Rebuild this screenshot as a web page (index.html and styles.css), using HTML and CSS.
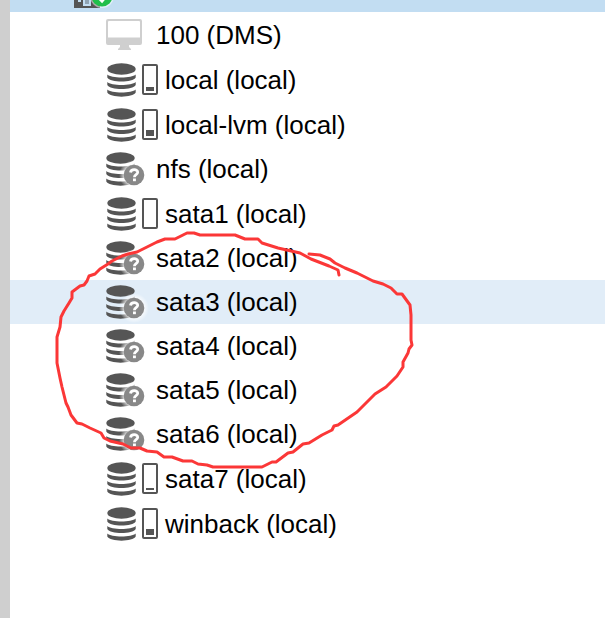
FILE: index.html
```html
<!DOCTYPE html>
<html lang="en">

<head>
    <meta charset="UTF-8">
    <meta name="viewport" content="width=device-width, initial-scale=1.0">
    <title>Server View</title>
    <link rel="stylesheet" href="styles.css">
</head>

<body>
    <!-- shared icons -->
    <svg class="sprite" aria-hidden="true">
        <symbol id="database" viewBox="0 0 29 34">
            <ellipse cx="14.500" cy="6" rx="14.200" ry="5.800" />
            <path d="M.3 11.500C4 15.500 25 15.500 28.700 11.500V14.500C26 19.800 3 19.800 .3 14.500Z" />
            <path d="M.3 19C4 23 25 23 28.700 19V22C26 27.300 3 27.300 .3 22Z" />
            <path d="M.3 26.500C4 30.500 25 30.500 28.700 26.500V29.500C26 35 3 35 .3 29.500Z" />
        </symbol>
        <symbol id="question" viewBox="0 0 30 30">
            <radialGradient id="halo">
                <stop offset="0.650" stop-color="#fff" stop-opacity=".8" />
                <stop offset="1" stop-color="#fff" stop-opacity="0" />
            </radialGradient>
            <circle cx="15" cy="15" r="15" fill="url(#halo)" />
            <circle cx="15" cy="15" r="10.300" fill="#888" />
            <path d="M11.500 12.500C12 8.800 18.700 8.800 18.700 12.300C18.700 14.800 15.400 14.600 15.400 17.200" fill="none" stroke="#fff" stroke-width="2.800" />
            <path d="M14 18.500h2.900v2.700H14z" fill="#fff" />
        </symbol>
    </svg>

    <div class="panel">
        <div class="node">
            <svg class="node-icon" viewBox="0 0 40 12" aria-hidden="true">
                <path d="M0 0H26V8H0Z" fill="#555" />
                <path d="M4 0h3v2H4zM9 0h8v6H9z" fill="#c2ddf2" />
                <path d="M11 0h4v4h-4z" fill="#8fa3b3" />
                <circle cx="28" cy="-4" r="12" fill="#fff" opacity=".5" />
                <circle cx="28" cy="-4" r="10.500" fill="#21bf4b" />
                <path d="M24 -3L28 1L34 -6" fill="none" stroke="#fff" stroke-width="3" />
            </svg>
        </div>
        <ul class="tree">
            <li class="item">
                <svg class="monitor" viewBox="0 0 36 32" aria-hidden="true">
                    <path fill-rule="evenodd" d="M2 0H34Q36 0 36 2V24Q36 26 34 26H23V28L25 30V31H12V30L14 28V26H2Q0 26 0 24V2Q0 0 2 0ZM3 2Q2 2 2 3V18.500H34V3Q34 2 33 2Z" />
                </svg>
                <span>100 (DMS)</span>
            </li>
            <li class="item storage">
                <svg class="database" aria-hidden="true"><use href="#database" /></svg>
                <span class="usage"><i style="height: 4px"></i></span>
                <span>local (local)</span>
            </li>
            <li class="item storage">
                <svg class="database" aria-hidden="true"><use href="#database" /></svg>
                <span class="usage"><i style="height: 6px"></i></span>
                <span>local-lvm (local)</span>
            </li>
            <li class="item">
                <span class="unknown">
                    <svg class="database" aria-hidden="true"><use href="#database" /></svg>
                    <svg class="question" aria-hidden="true"><use href="#question" /></svg>
                </span>
                <span>nfs (local)</span>
            </li>
            <li class="item storage">
                <svg class="database" aria-hidden="true"><use href="#database" /></svg>
                <span class="usage"><i style="height: 0"></i></span>
                <span>sata1 (local)</span>
            </li>
            <li class="item">
                <span class="unknown">
                    <svg class="database" aria-hidden="true"><use href="#database" /></svg>
                    <svg class="question" aria-hidden="true"><use href="#question" /></svg>
                </span>
                <span>sata2 (local)</span>
            </li>
            <li class="item active">
                <span class="unknown">
                    <svg class="database" aria-hidden="true"><use href="#database" /></svg>
                    <svg class="question" aria-hidden="true"><use href="#question" /></svg>
                </span>
                <span>sata3 (local)</span>
            </li>
            <li class="item">
                <span class="unknown">
                    <svg class="database" aria-hidden="true"><use href="#database" /></svg>
                    <svg class="question" aria-hidden="true"><use href="#question" /></svg>
                </span>
                <span>sata4 (local)</span>
            </li>
            <li class="item">
                <span class="unknown">
                    <svg class="database" aria-hidden="true"><use href="#database" /></svg>
                    <svg class="question" aria-hidden="true"><use href="#question" /></svg>
                </span>
                <span>sata5 (local)</span>
            </li>
            <li class="item">
                <span class="unknown">
                    <svg class="database" aria-hidden="true"><use href="#database" /></svg>
                    <svg class="question" aria-hidden="true"><use href="#question" /></svg>
                </span>
                <span>sata6 (local)</span>
            </li>
            <li class="item storage">
                <svg class="database" aria-hidden="true"><use href="#database" /></svg>
                <span class="usage"><i style="height: 2px"></i></span>
                <span>sata7 (local)</span>
            </li>
            <li class="item storage">
                <svg class="database" aria-hidden="true"><use href="#database" /></svg>
                <span class="usage"><i style="height: 6px"></i></span>
                <span>winback (local)</span>
            </li>
        </ul>

        <!-- red pen mark around sata2 - sata6 -->
        <svg class="mark" viewBox="50 225 370 250" aria-hidden="true">
            <path d="M339 275L338 270L329 266L311 259L300 253L278 248L262 243L258 239L245 239L235 235L200 235L194 233L187 233L175 239L165 239L157 242L147 247L137 252L128 254L122 256L112 261L108 264L100 269L95 274L89 276L87 281L84 285L80 286L72 292L72 298L69 303L64 311L61 317L60 327L57 337L57 363L60 378L62 387L66 403L68 407L71 415L77 423L82 424L90 428L101 433L104 438L110 441L123 444L131 448L140 448L147 451L157 452L164 457L172 457L183 461L192 461L198 464L207 465L213 467L262 467L272 462L276 462L288 453L293 452L303 444L309 443L322 435L332 430L334 426L338 425L357 412L375 394L386 387L397 376L403 367L403 362L408 353L409 349L412 345L411 340L411 315L410 305L402 294L397 294L391 288L383 284L373 281L357 273L345 268L335 263L330 259L320 255L309 254" />
        </svg>
    </div>
</body>

</html>
```

FILE: styles.css
```css
* {
    margin: 0;
    padding: 0;
    box-sizing: border-box;
}

body {
    font-family: "Liberation Sans", Arial, sans-serif;
    font-size: 26px;
    line-height: 44px;
    color: #000;
    background-color: #fff;
}

.sprite {
    position: absolute;
    width: 0;
    height: 0;
}

svg {
    display: block;
    flex: none;
}

.panel {
    position: relative;
    min-height: 100vh;
    border-left: 10px solid #cfcfcf;
}

.node {
    height: 12px;
    padding-left: 64px;
    background-color: #c2ddf2;
}

.node-icon {
    width: 40px;
    height: 12px;
}

.tree {
    padding-top: 1px;
    list-style: none;
}

.item {
    display: flex;
    align-items: center;
    gap: 12px;
    height: 44px;
    padding-left: 96px;
    white-space: nowrap;
}

.item.storage {
    gap: 6px;
    height: 45px;
    padding-left: 97px;
}

.item.active {
    background-color: #e1edf8;
}

.monitor {
    width: 36px;
    height: 32px;
    margin-right: 2px;
    fill: #cfcfcf;
}

.database {
    width: 29px;
    height: 34px;
    fill: #555;
}

.unknown {
    position: relative;
    width: 38px;
}

.question {
    position: absolute;
    right: -5px;
    bottom: -4px;
    width: 30px;
    height: 30px;
}

.usage {
    display: flex;
    align-items: flex-end;
    width: 16px;
    height: 31px;
    margin-right: 1px;
    padding: 2px;
    border: 2px solid #555;
    border-radius: 2px;
}

.usage i {
    width: 100%;
    background-color: #555;
}

.mark {
    position: absolute;
    top: 225px;
    left: 40px;
    width: 370px;
    height: 250px;
    fill: none;
    stroke: #fb3737;
    stroke-width: 3;
    stroke-linejoin: round;
    stroke-linecap: round;
    pointer-events: none;
}
```
